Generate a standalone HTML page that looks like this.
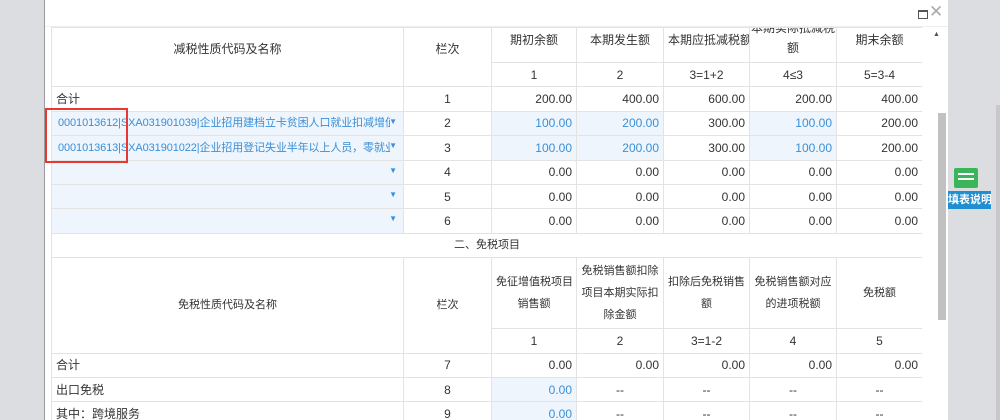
<!DOCTYPE html>
<html><head><meta charset="utf-8"><style>
html,body{margin:0;width:1000px;height:420px;overflow:hidden}
body{background:#dcdde0;font-family:"Liberation Sans","Noto Sans CJK SC",sans-serif;font-size:12px;color:#333;position:relative}
#dlg{position:absolute;left:44px;top:0;width:903px;height:420px;background:#fff;border-left:1px solid #9a9a9a;overflow:hidden}
#top{position:absolute;left:0;top:0;width:903px;height:26px;border-bottom:1px solid #eee}
table{position:absolute;left:6px;top:27px;border-collapse:collapse;table-layout:fixed;width:871px}
td{border:1px solid #e3e3e3;padding:0 4px;height:23.4px;line-height:14px;text-align:center;white-space:nowrap;overflow:hidden}
.r{text-align:right}.l{text-align:left}
.b{background:#eef5fd}.bl{color:#3c8fd6}
.sel{position:relative;text-align:left;background:#eef5fd;color:#3c8fd6;padding-left:6px;font-size:11px;letter-spacing:-0.1px}
.sel span{display:block;width:332px;overflow:hidden}
.sel i{position:absolute;right:6px;top:3px;font-style:normal;font-size:8px;color:#3c8fd6}
.sm{font-size:11px;line-height:22px}
</style></head><body>
<div id="dlg">
<div id="top"><div style="position:absolute;left:873px;top:10px;width:8px;height:6px;border:1px solid #555;border-top-width:2px"></div><div style="position:absolute;left:884px;top:2px;font-size:17px;color:#aaa">✕</div></div>
<table>
<colgroup><col style="width:352px"><col style="width:88px"><col style="width:85px"><col style="width:87px"><col style="width:86px"><col style="width:87px"><col style="width:86px"></colgroup>
<tr style="height:35px"><td rowspan="2" style="vertical-align:top;padding-top:14px">减税性质代码及名称</td><td rowspan="2" style="vertical-align:top;padding-top:14px">栏次</td><td style="height:34px;vertical-align:top;padding-top:5px;box-sizing:border-box">期初余额</td><td style="vertical-align:top;padding-top:5px">本期发生额</td><td style="vertical-align:top;padding-top:5px">本期应抵减税额</td><td style="vertical-align:top;line-height:20px;padding:0"><div style="margin-top:-10px">本期实际抵减税<br>额</div></td><td style="vertical-align:top;padding-top:5px">期末余额</td></tr>
<tr><td>1</td><td>2</td><td>3=1+2</td><td>4≤3</td><td>5=3-4</td></tr>
<tr><td class="l">合计</td><td>1</td><td class="r">200.00</td><td class="r">400.00</td><td class="r">600.00</td><td class="r">200.00</td><td class="r">400.00</td></tr>
<tr><td class="sel"><span>0001013612|SXA031901039|企业招用建档立卡贫困人口就业扣减增值税</span><i>▼</i></td><td>2</td><td class="r b bl">100.00</td><td class="r b bl">200.00</td><td class="r">300.00</td><td class="r b bl">100.00</td><td class="r">200.00</td></tr>
<tr><td class="sel"><span>0001013613|SXA031901022|企业招用登记失业半年以上人员，零就业家庭</span><i>▼</i></td><td>3</td><td class="r b bl">100.00</td><td class="r b bl">200.00</td><td class="r">300.00</td><td class="r b bl">100.00</td><td class="r">200.00</td></tr>
<tr><td class="sel"><i>▼</i></td><td>4</td><td class="r">0.00</td><td class="r">0.00</td><td class="r">0.00</td><td class="r">0.00</td><td class="r">0.00</td></tr>
<tr><td class="sel"><i>▼</i></td><td>5</td><td class="r">0.00</td><td class="r">0.00</td><td class="r">0.00</td><td class="r">0.00</td><td class="r">0.00</td></tr>
<tr><td class="sel"><i>▼</i></td><td>6</td><td class="r">0.00</td><td class="r">0.00</td><td class="r">0.00</td><td class="r">0.00</td><td class="r">0.00</td></tr>
<tr><td colspan="7" class="sm">二、免税项目</td></tr>
<tr><td rowspan="2" class="sm">免税性质代码及名称</td><td rowspan="2" class="sm">栏次</td><td class="sm" style="height:70px">免征增值税项目<br>销售额</td><td class="sm">免税销售额扣除<br>项目本期实际扣<br>除金额</td><td class="sm">扣除后免税销售<br>额</td><td class="sm">免税销售额对应<br>的进项税额</td><td class="sm">免税额</td></tr>
<tr><td>1</td><td>2</td><td>3=1-2</td><td>4</td><td>5</td></tr>
<tr><td class="l">合计</td><td>7</td><td class="r">0.00</td><td class="r">0.00</td><td class="r">0.00</td><td class="r">0.00</td><td class="r">0.00</td></tr>
<tr><td class="l">出口免税</td><td>8</td><td class="r b bl">0.00</td><td>--</td><td>--</td><td>--</td><td>--</td></tr>
<tr><td class="l">其中：跨境服务</td><td>9</td><td class="r b bl">0.00</td><td>--</td><td>--</td><td>--</td><td>--</td></tr>
</table>
<div style="position:absolute;left:0px;top:108px;width:83px;height:55px;border:2px solid #e53935;box-sizing:border-box"></div>
<div style="position:absolute;left:877px;top:27px;width:26px;height:393px;background:#fff"></div>
<div style="position:absolute;left:888px;top:31px;font-size:7px;color:#555">▲</div>
<div style="position:absolute;left:893px;top:113px;width:8px;height:207px;background:#c1c1c1"></div>
</div>
<div style="position:absolute;left:996px;top:105px;width:4px;height:315px;background:#c8c8c8"></div>
<div style="position:absolute;left:954px;top:168px;width:24px;height:20px;background:#3bb55a;border-radius:2px"><div style="margin:5px 4px;height:2px;background:#fff;box-shadow:0 5px 0 #fff"></div></div>
<div style="position:absolute;left:948px;top:191px;width:43px;height:18px;background:#1f8fd0;color:#fff;font-size:11px;font-weight:bold;line-height:18px;text-align:center;white-space:nowrap;overflow:hidden">填表说明</div>
</body></html>
